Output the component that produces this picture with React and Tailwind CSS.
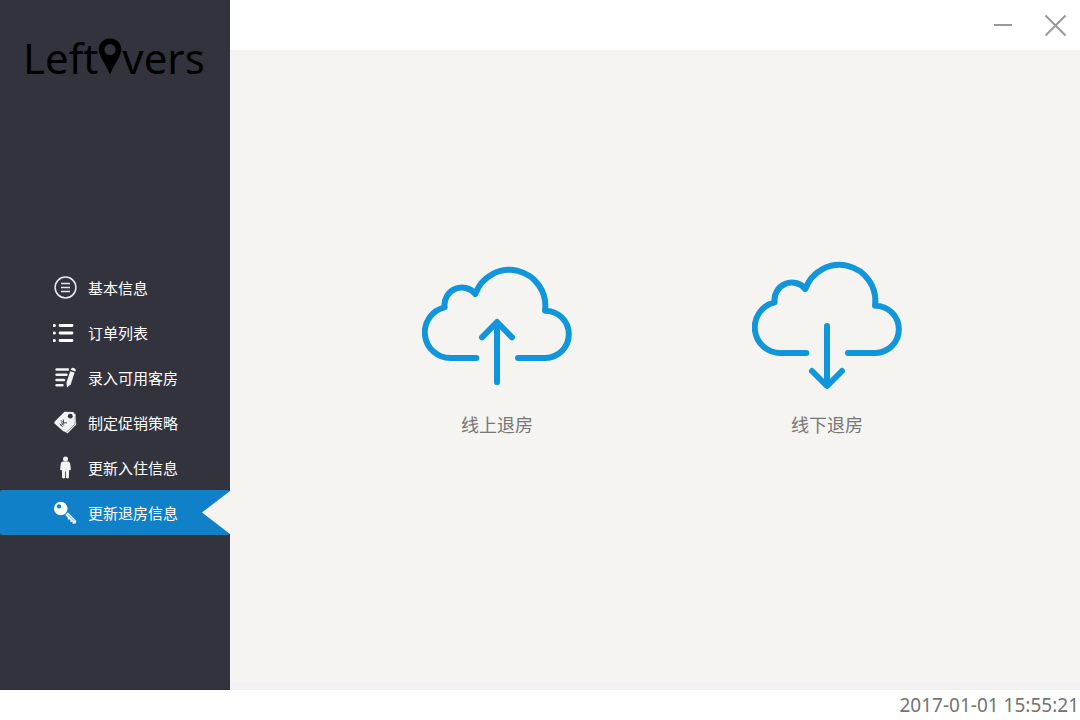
import React from "react";

function InfoIcon() {
  return (
    <svg viewBox="0 0 24 24" className="size-6" fill="none" stroke="#e8e8ea" aria-hidden="true">
      <circle cx="12.5" cy="11.5" r="10.4" strokeWidth="1.5" />
      <path d="M8 7.5h9M8 11.5h9M8 15.5h9" strokeWidth="1.5" />
    </svg>
  );
}

function ListIcon() {
  return (
    <svg viewBox="0 0 24 24" className="size-6" fill="none" stroke="#fff" strokeLinecap="round" aria-hidden="true">
      <path d="M7 4.500h12M7 12h12M7 19.500h12" strokeWidth="2.800" />
      <path d="M1.300 4.500h.1M1.300 12h.1M1.300 19.500h.1" strokeWidth="3" />
    </svg>
  );
}

function EditIcon() {
  return (
    <svg viewBox="0 0 24 24" className="size-6" fill="#f2f2f4" aria-hidden="true">
      <path d="M3.500 3.500h11.500M3.500 8.700h10M3.500 14h7.500M3.500 19.200h6" stroke="#f2f2f4" strokeWidth="2.400" strokeLinecap="round" fill="none" />
      <path d="M17.200 5.300 21.600 6.600 17.800 18.300 14 21.400 13.400 16.800Z" />
      <path d="M17.700 3.700 18.600 2Q21.300 1.300 23 3.900L22.100 5.500Z" />
    </svg>
  );
}

function TagIcon() {
  return (
    <svg viewBox="0 0 24 24" className="size-6" aria-hidden="true">
      <path d="M12.200 1.500 22.500 3 23.300 13.500 14.500 22.600 11.500 20.500Z" fill="#f2f2f4" />
      <path d="M22 5v8.300L13.300 21.300" fill="none" stroke="#77777e" strokeWidth="0.800" />
      <path d="M11.500.8 20 .9Q21.300 1.300 21.500 2.700L21.500 11.200 12.300 20.300Q11 21 10 20L1.500 12.600Q.8 11.500 1.700 10.600Z" fill="#f2f2f4" />
      <circle cx="17.300" cy="5.200" r="2.400" fill="#33333d" />
      <path d="M7.800 9.200 10.600 12 14 11.700M10.600 12 10.300 8.500M10.600 12 7.600 15M8 11.500 11.300 14.700M6.600 12.700 9.800 15.900" fill="none" stroke="#33333d" strokeWidth="0.900" />
    </svg>
  );
}

function PersonIcon() {
  return (
    <svg viewBox="0 0 24 24" className="size-6" fill="#f2f2f4" aria-hidden="true">
      <circle cx="12.500" cy="3" r="2.500" />
      <path d="M9.800 5.500h5.400Q17 5.700 17.200 7.700L17.900 13.500Q17.100 14.800 16.100 13.700L15.900 21.800Q14.400 23.200 12.900 21.800V15.500h-.8V21.800Q10.600 23.200 9.100 21.800L8.900 13.700Q7.900 14.800 7.100 13.500L7.800 7.700Q8 5.700 9.800 5.500Z" />
    </svg>
  );
}

function KeyIcon() {
  return (
    <svg viewBox="0 0 24 24" className="size-6" aria-hidden="true">
      <circle cx="7.800" cy="7.500" r="6.800" fill="#fff" />
      <circle cx="6" cy="5.400" r="2.100" fill="#1080c8" />
      <path d="M14.800 11.300 23.300 19.800 22.900 22.300 19.800 22.900 19.500 20.700 17.300 21 17.300 18.600 14.700 18.500 14.900 16.700 12.300 14Z" fill="#f2f2f4" />
      <path d="M15 13.500 21.300 19.900" stroke="#1080c8" strokeWidth="0.600" />
    </svg>
  );
}

function Cloud({ direction }) {
  const up = direction === "up";
  return (
    <svg
      viewBox="0 0 450 390"
      className="w-[150px]"
      fill="none"
      stroke="#1296db"
      strokeWidth="18"
      strokeLinecap="round"
      strokeLinejoin="round"
      aria-hidden="true"
    >
      <g transform={up ? "translate(0 15)" : undefined}>
        <path d="M163 276H87A77 77 0 0 1 68 124A52 52 0 0 1 160 84A108 108 0 0 1 369 134A71 71 0 0 1 370 276H288" />
        <path d={up ? "M225 349V169M180 214 225 168 270 214" : "M225 195V374M180 330 225 375 270 330"} />
      </g>
    </svg>
  );
}

const menu = [
  { label: "基本信息", Icon: InfoIcon },
  { label: "订单列表", Icon: ListIcon },
  { label: "录入可用客房", Icon: EditIcon },
  { label: "制定促销策略", Icon: TagIcon },
  { label: "更新入住信息", Icon: PersonIcon },
  { label: "更新退房信息", Icon: KeyIcon, active: true },
];

const actions = [
  { label: "线上退房", direction: "up" },
  { label: "线下退房", direction: "down" },
];

function Logo() {
  return (
    <h1 className="flex items-center pl-[23px] pt-7 font-['Noto_Sans'] text-[42px] leading-[60px] text-black">
      <span>Left</span>
      <svg viewBox="0 0 24 40" className="h-10 w-6" role="img" aria-label="O">
        <path
          fillRule="evenodd"
          fill="#000"
          d="M12 .5C5.500.500.700 5.300.700 11.300C.700 18 6.500 24 12 36.500C17.500 24 23.300 18 23.300 11.300C23.300 5.300 18.500.500 12 .500ZM12 6A5.600 5.600 0 1 1 12 17.200A5.600 5.600 0 1 1 12 6Z"
        />
      </svg>
      <span>vers</span>
    </h1>
  );
}

export default function App() {
  return (
    <div className="flex min-h-screen flex-col bg-white font-['Noto_Sans','Noto_Sans_CJK_SC',sans-serif]">
      <div className="flex flex-1">
        <aside className="w-[230px] shrink-0 border-b border-[#332c35] bg-[#33333d]">
          <Logo />
          <nav className="pt-[177px]">
            <ul>
              {menu.map(({ label, Icon, active }) => (
                <li key={label}>
                  <a
                    href="#"
                    aria-current={active ? "page" : undefined}
                    className={
                      active
                        ? "flex h-[45px] items-center rounded-xs bg-[#1080c8] pl-[53px] text-[15px] text-white"
                        : "flex h-[45px] items-center pl-[53px] text-[15px] text-white"
                    }
                  >
                    <Icon />
                    <span className="ml-[11px] pt-0.5">{label}</span>
                    {active && (
                      <svg viewBox="0 0 28 43" className="ml-auto h-[43px] w-7" aria-hidden="true">
                        <path d="M28 0V43L0 21.500Z" fill="#f5f4f0" />
                      </svg>
                    )}
                  </a>
                </li>
              ))}
            </ul>
          </nav>
        </aside>

        <div className="flex flex-1 flex-col">
          <header className="flex h-[50px] items-center justify-end gap-7 pr-[13px]">
            <button type="button" aria-label="最小化" className="flex size-6 items-center justify-center">
              <svg viewBox="0 0 24 24" className="size-6" aria-hidden="true">
                <path d="M3 12H21" stroke="#999" strokeWidth="2" />
              </svg>
            </button>
            <button type="button" aria-label="关闭" className="flex size-6 items-center justify-center">
              <svg viewBox="0 0 24 24" className="size-6" aria-hidden="true">
                <path d="M2.500 2.500 22.500 22.500M22.500 2.500 2.500 22.500" stroke="#999" strokeWidth="2" />
              </svg>
            </button>
          </header>
          <main className="flex flex-1 items-start justify-center gap-[180px] border-b-8 border-[#f2f2f4] bg-[#f5f4f0] pl-[14px] pt-[211px]">
            {actions.map(({ label, direction }) => (
              <button key={label} type="button" className="flex flex-col items-center gap-5 text-lg text-[#777777]">
                <Cloud direction={direction} />
                <span>{label}</span>
              </button>
            ))}
          </main>
        </div>
      </div>
      <footer className="flex h-[30px] items-center justify-end pr-px text-[19px] text-[#737373]">
        <time dateTime="2017-01-01T15:55:21">2017-01-01 15:55:21</time>
      </footer>
    </div>
  );
}
